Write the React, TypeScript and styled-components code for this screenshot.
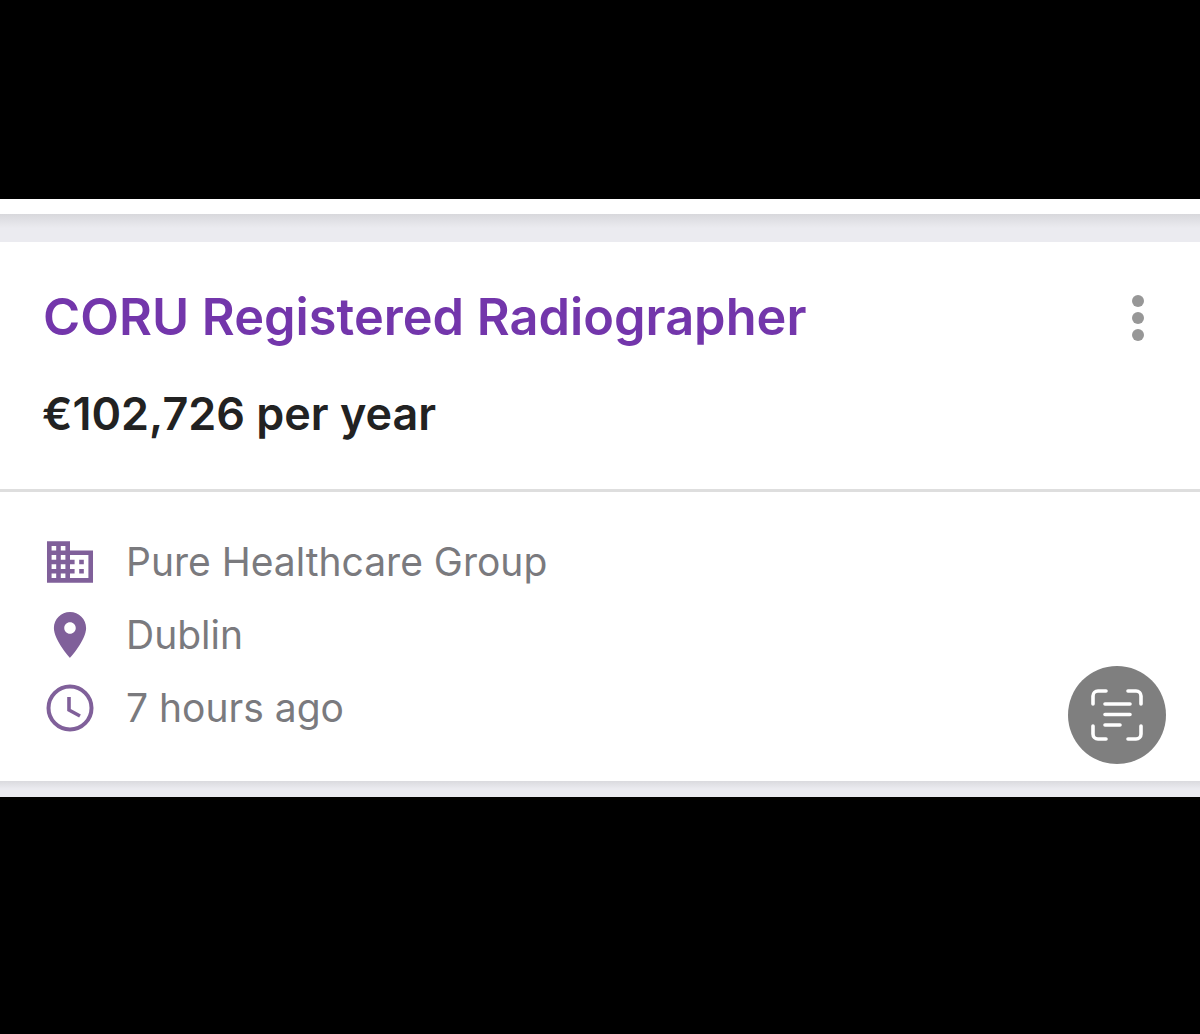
import React from "react";
import styled, { createGlobalStyle } from "styled-components";

const Global = createGlobalStyle`
  html, body { margin: 0; padding: 0; background: #000; }
  body { font-family: Inter, "Noto Sans", sans-serif; }
`;

const Page = styled.div`
  width: 1200px;
  height: 1034px;
  display: flex;
  flex-direction: column;
  background: #000;
  overflow: hidden;
`;
const BlackBand = styled.div<{ $h: number }>`
  height: ${(p) => p.$h}px;
  flex: none;
  background: #000;
`;
const TopStrip = styled.div`
  height: 15px;
  flex: none;
  background: #fff;
`;
const GreyGap = styled.div<{ $h: number; $shade: string }>`
  height: ${(p) => p.$h}px;
  flex: none;
  background: linear-gradient(to bottom, ${(p) => p.$shade}, #ebebf0 ${(p) => Math.round(p.$h * 0.5)}px);
`;
const Card = styled.div`
  position: relative;
  height: 539px;
  flex: none;
  background: #fff;
  display: flex;
  flex-direction: column;
`;
const Header = styled.div`
  height: 247px;
  flex: none;
  box-sizing: border-box;
  padding: 45px 44px 0 43px;
  position: relative;
`;
const Title = styled.div`
  font-size: 50.500px;
  line-height: 60px;
  font-weight: 600;
  color: #7336ab;
  white-space: nowrap;
`;
const Salary = styled.div`
  margin: 37px 0 0 -1px;
  font-size: 44.900px;
  line-height: 60px;
  font-weight: 600;
  color: #222;
  white-space: nowrap;
`;
const Menu = styled.div`
  position: absolute;
  right: 56px;
  top: 53px;
  display: flex;
  flex-direction: column;
  gap: 5px;
`;
const Dot = styled.span`
  width: 12px;
  height: 12px;
  border-radius: 50%;
  background: #979797;
`;
const Divider = styled.div`
  height: 3px;
  flex: none;
  background: #dedede;
`;
const Details = styled.div`
  display: flex;
  flex-direction: column;
  padding: 33px 0 0 44px;
`;
const Row = styled.div`
  height: 73px;
  display: flex;
  align-items: center;
  gap: 31px;
`;
const IconWrap = styled.div`
  width: 52px;
  height: 52px;
  flex: none;
  display: flex;
  align-items: center;
  justify-content: center;
  color: #80609a;
`;
const Meta = styled.div`
  font-size: 39px;
  line-height: 48px;
  font-weight: 400;
  color: #7a7a7e;
  white-space: nowrap;
  margin-left: -1px;
`;
const Fab = styled.div`
  position: absolute;
  left: 1068px;
  top: 424px;
  width: 98px;
  height: 98px;
  border-radius: 50%;
  background: #7f7f7f;
  display: flex;
  align-items: center;
  justify-content: center;
`;

const BuildingIcon = () => (
  <svg width="52" height="52" viewBox="0.700 0.700 22.600 22.600" fill="currentColor">
    <path d="M12 7V3H2v18h20V7H12zM6 19H4v-2h2v2zm0-4H4v-2h2v2zm0-4H4V9h2v2zm0-4H4V5h2v2zm4 12H8v-2h2v2zm0-4H8v-2h2v2zm0-4H8V9h2v2zm0-4H8V5h2v2zm10 12h-8v-2h2v-2h-2v-2h2v-2h-2V9h8v10zm-2-8h-2v2h2v-2zm0 4h-2v2h2v-2z" />
  </svg>
);
const PinIcon = () => (
  <svg width="52" height="52" viewBox="0.700 0.700 22.600 22.600" fill="currentColor">
    <path d="M12 2C8.130 2 5 5.130 5 9c0 5.250 7 13 7 13s7-7.750 7-13c0-3.870-3.130-7-7-7zm0 9.500c-1.380 0-2.500-1.120-2.500-2.500s1.120-2.500 2.500-2.500 2.500 1.120 2.500 2.500-1.120 2.500-2.500 2.500z" />
  </svg>
);
const ClockIcon = () => (
  <svg width="52" height="52" viewBox="0 0 52 52" fill="none" stroke="currentColor">
    <circle cx="26" cy="26" r="21.500" strokeWidth="4" />
    <path d="M25 15v13l11 6" strokeWidth="3.600" />
  </svg>
);
const ScanIcon = () => (
  <svg width="56" height="56" viewBox="0 0 56 56" fill="none" stroke="#fff" strokeWidth="3.600" strokeLinecap="round">
    <path d="M17 4H9a5 5 0 0 0-5 5v8" />
    <path d="M39 4h8a5 5 0 0 1 5 5v8" />
    <path d="M4 39v8a5 5 0 0 0 5 5h8" />
    <path d="M52 39v8a5 5 0 0 1-5 5h-8" />
    <path d="M16 17h25M16 27.500h25M16 38h15" />
  </svg>
);

export default function App() {
  return (
    <Page>
      <Global />
      <BlackBand $h={199} />
      <TopStrip />
      <GreyGap $h={28} $shade="#d8d8dc" />
      <Card>
        <Header>
          <Title>CORU Registered Radiographer</Title>
          <Salary>€102,726 per year</Salary>
          <Menu>
            <Dot />
            <Dot />
            <Dot />
          </Menu>
        </Header>
        <Divider />
        <Details>
          <Row>
            <IconWrap>
              <BuildingIcon />
            </IconWrap>
            <Meta>Pure Healthcare Group</Meta>
          </Row>
          <Row>
            <IconWrap>
              <PinIcon />
            </IconWrap>
            <Meta>Dublin</Meta>
          </Row>
          <Row>
            <IconWrap>
              <ClockIcon />
            </IconWrap>
            <Meta>7 hours ago</Meta>
          </Row>
        </Details>
        <Fab>
          <ScanIcon />
        </Fab>
      </Card>
      <GreyGap $h={16} $shade="#dadade" />
      <BlackBand $h={237} />
    </Page>
  );
}
